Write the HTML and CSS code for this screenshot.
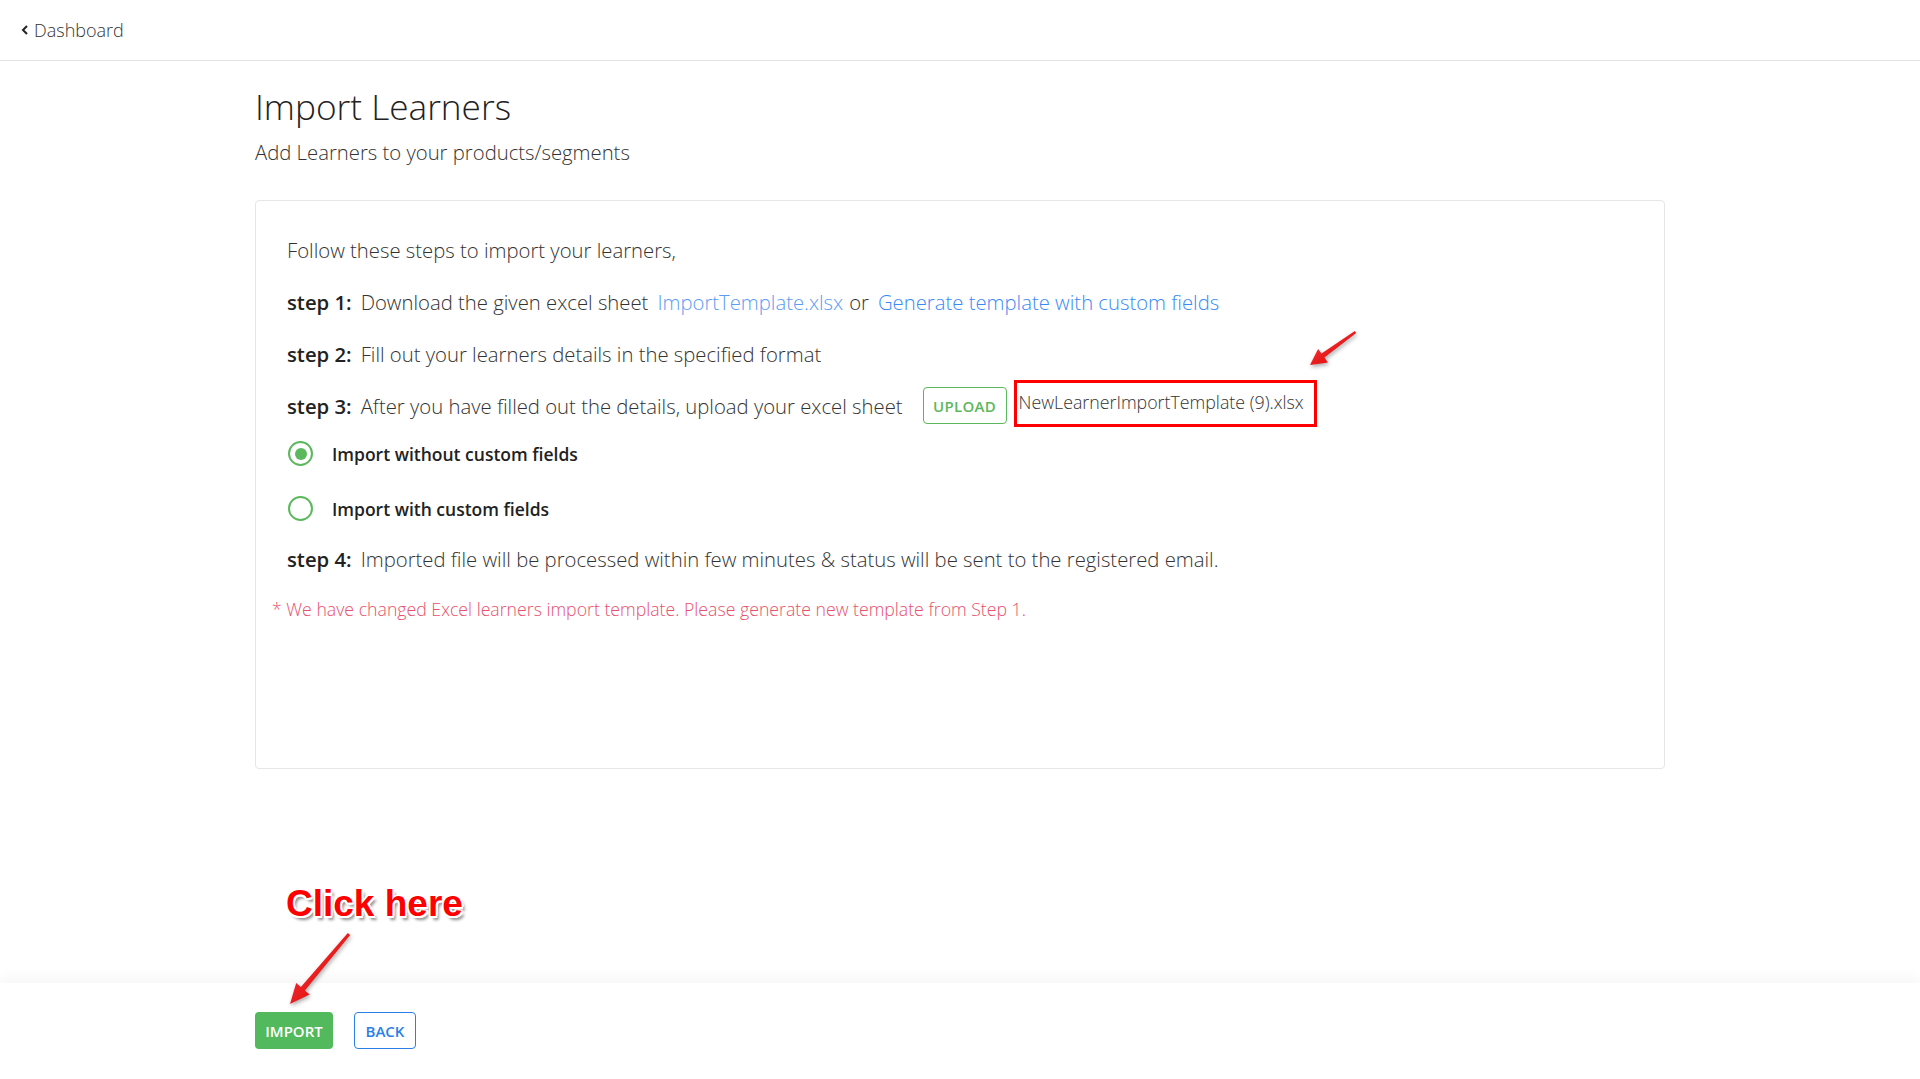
FILE: index.html
```html
<!DOCTYPE html>
<html lang="en">

<head>
    <meta charset="UTF-8">
    <meta name="viewport" content="width=device-width, initial-scale=1.0">
    <title>Import Learners</title>
    <link rel="stylesheet" href="styles.css">
</head>

<body>
    <div class="page">
        <!-- Top bar -->
        <div class="topbar">
            <a class="back-link" href="#">
                <svg width="8" height="10" viewBox="0 0 8 10"><path d="M6 1 L2 5 L6 9" fill="none" stroke="#222" stroke-width="2"/></svg>
                Dashboard
            </a>
        </div>

        <!-- Main content -->
        <div class="main">
            <h1 class="page-title">Import Learners</h1>
            <p class="page-sub">Add Learners to your products/segments</p>

            <div class="card">
                <div class="row intro">Follow these steps to import your learners,</div>

                <div class="row">
                    <span class="step-label">step 1:</span>
                    Download the given excel sheet
                    <a class="link light" href="#">ImportTemplate.xlsx</a> or
                    <a class="link" href="#">Generate template with custom fields</a>
                </div>

                <div class="row">
                    <span class="step-label">step 2:</span>
                    Fill out your learners details in the specified format
                </div>

                <div class="row step-upload">
                    <span class="step-label">step 3:</span>
                    After you have filled out the details, upload your excel sheet
                    <button class="upload-btn">UPLOAD</button>
                    <span class="file-name">NewLearnerImportTemplate (9).xlsx</span>
                </div>

                <label class="radio-row first">
                    <span class="radio checked"></span>
                    Import without custom fields
                </label>

                <label class="radio-row second">
                    <span class="radio"></span>
                    Import with custom fields
                </label>

                <div class="row step-last">
                    <span class="step-label">step 4:</span>
                    Imported file will be processed within few minutes &amp; status will be sent to the registered email.
                </div>

                <div class="note">* We have changed Excel learners import template. Please generate new template from Step 1.</div>
            </div>
        </div>

        <!-- Bottom action bar -->
        <div class="footer">
            <button class="import-btn">IMPORT</button>
            <button class="back-btn">BACK</button>
        </div>

        <!-- Annotations -->
        <svg class="arrow arrow-file" width="65" height="50" viewBox="0 0 65 50">
            <defs>
                <linearGradient id="redA" x1="0" y1="0" x2="1" y2="1">
                    <stop offset="0" stop-color="#ff3b3b"/>
                    <stop offset="1" stop-color="#d40000"/>
                </linearGradient>
            </defs>
            <polygon points="56.2,8 24.4,32.6 27.9,37.4 10,40 18.1,23.9 21.5,28.6 54.8,6" fill="url(#redA)"/>
        </svg>

        <div class="click-here">Click here</div>

        <svg class="arrow arrow-import" width="80" height="90" viewBox="0 0 80 90">
            <defs>
                <linearGradient id="redB" x1="0" y1="0" x2="1" y2="1">
                    <stop offset="0" stop-color="#ff3b3b"/>
                    <stop offset="1" stop-color="#d40000"/>
                </linearGradient>
            </defs>
            <polygon points="70.2,10 24.9,65.4 29.6,69.4 10,79 16.2,58 20.9,62 67.8,8" fill="url(#redB)"/>
        </svg>
    </div>
</body>

</html>
```

FILE: styles.css
```css
body {
    margin: 0;
    font-family: "Open Sans", Arial, sans-serif;
    color: #333;
    background: #fff;
}

.page {
    position: relative;
    min-height: 100vh;
    display: flex;
    flex-direction: column;
}

.topbar {
    height: 60px;
    border-bottom: 1px solid #e4e4e4;
    display: flex;
    align-items: center;
    padding-left: 21px;
}

.back-link {
    display: flex;
    align-items: center;
    gap: 5px;
    color: #333;
    font-size: 18px;
    font-weight: 300;
    text-decoration: none;
}

.main {
    flex: 1;
    width: 1410px;
    margin: 0 auto;
}

.page-title {
    margin: 24px 0 0;
    font-size: 35.2px;
    font-weight: 300;
    line-height: 43px;
    color: #222;
}

.page-sub {
    margin: 10px 0 0;
    font-size: 20.3px;
    font-weight: 300;
    line-height: 28px;
    color: #333;
}

.card {
    margin-top: 34px;
    height: 569px;
    box-sizing: border-box;
    border: 1px solid #e6e6e6;
    border-radius: 4px;
    padding: 35px 31px 0;
    font-size: 20.3px;
    font-weight: 300;
}

.row {
    display: flex;
    align-items: center;
    height: 27px;
    margin-bottom: 25px;
    white-space: nowrap;
}

.step-label {
    font-weight: 600;
    color: #222;
    margin-right: 9px;
}

.link {
    color: #3a8af5;
    text-decoration: none;
    margin: 0 6px 0 9px;
}

.link.light {
    color: #5b9cf5;
}

.upload-btn {
    margin-left: 20px;
    width: 84px;
    height: 37px;
    border: 1px solid #5cb85c;
    border-radius: 4px;
    background: #fff;
    color: #5cb85c;
    font-family: "Open Sans", Arial, sans-serif;
    font-size: 15px;
    font-weight: 600;
    letter-spacing: 0.3px;
}

.file-name {
    margin-left: 7px;
    margin-bottom: 4px;
    width: 303px;
    height: 47px;
    box-sizing: border-box;
    border: 3px solid #ff0000;
    padding: 7px 0 0 2px;
    font-size: 17.8px;
    color: #333;
    line-height: 24px;
}

.radio-row {
    display: flex;
    align-items: center;
    height: 27px;
    gap: 19px;
    padding-left: 1px;
    font-size: 17.5px;
    font-weight: 600;
    color: #222;
}

.radio-row.first {
    margin-top: -4px;
}

.radio-row.second {
    margin-top: 28px;
}

.radio {
    width: 25px;
    height: 25px;
    box-sizing: border-box;
    border: 2.5px solid #5cb85c;
    border-radius: 50%;
    display: flex;
    align-items: center;
    justify-content: center;
}

.radio.checked::after {
    content: "";
    width: 12px;
    height: 12px;
    border-radius: 50%;
    background: #5cb85c;
}

.step-last {
    margin-top: 23px;
    margin-bottom: 0;
}

.note {
    margin: 25px 0 0 -15px;
    font-size: 17.7px;
    color: #e8506c;
    line-height: 24px;
}

.footer {
    height: 96px;
    box-sizing: border-box;
    padding: 29px 0 0 255px;
    display: flex;
    align-items: flex-start;
    gap: 21px;
    background: #fff;
    box-shadow: 0 -6px 12px rgba(0, 0, 0, 0.035);
}

.import-btn,
.back-btn {
    height: 37px;
    border-radius: 4px;
    font-family: "Open Sans", Arial, sans-serif;
    font-size: 15px;
    font-weight: 600;
    cursor: pointer;
}

.import-btn {
    width: 78px;
    border: none;
    background: #52b95c;
    color: #fff;
}

.back-btn {
    width: 62px;
    border: 1px solid #2a7fe8;
    background: #fff;
    color: #2a7fe8;
}

.arrow {
    position: absolute;
    filter: drop-shadow(1px 2px 2px rgba(0, 0, 0, 0.35));
}

.arrow-file {
    left: 1300px;
    top: 325px;
}

.arrow-import {
    left: 280px;
    top: 925px;
}

.click-here {
    position: absolute;
    left: 286px;
    top: 884px;
    font-family: "Liberation Sans", Arial, sans-serif;
    font-weight: bold;
    font-size: 37px;
    line-height: 40px;
    color: #ff0000;
    text-shadow: -1.5px -1.5px 0 #fff, 1.5px -1.5px 0 #fff, -1.5px 1.5px 0 #fff, 1.5px 1.5px 0 #fff,
        0 2px 0 #fff, 2px 0 0 #fff, 3px 4px 3px rgba(0, 0, 0, 0.45);
}
```
